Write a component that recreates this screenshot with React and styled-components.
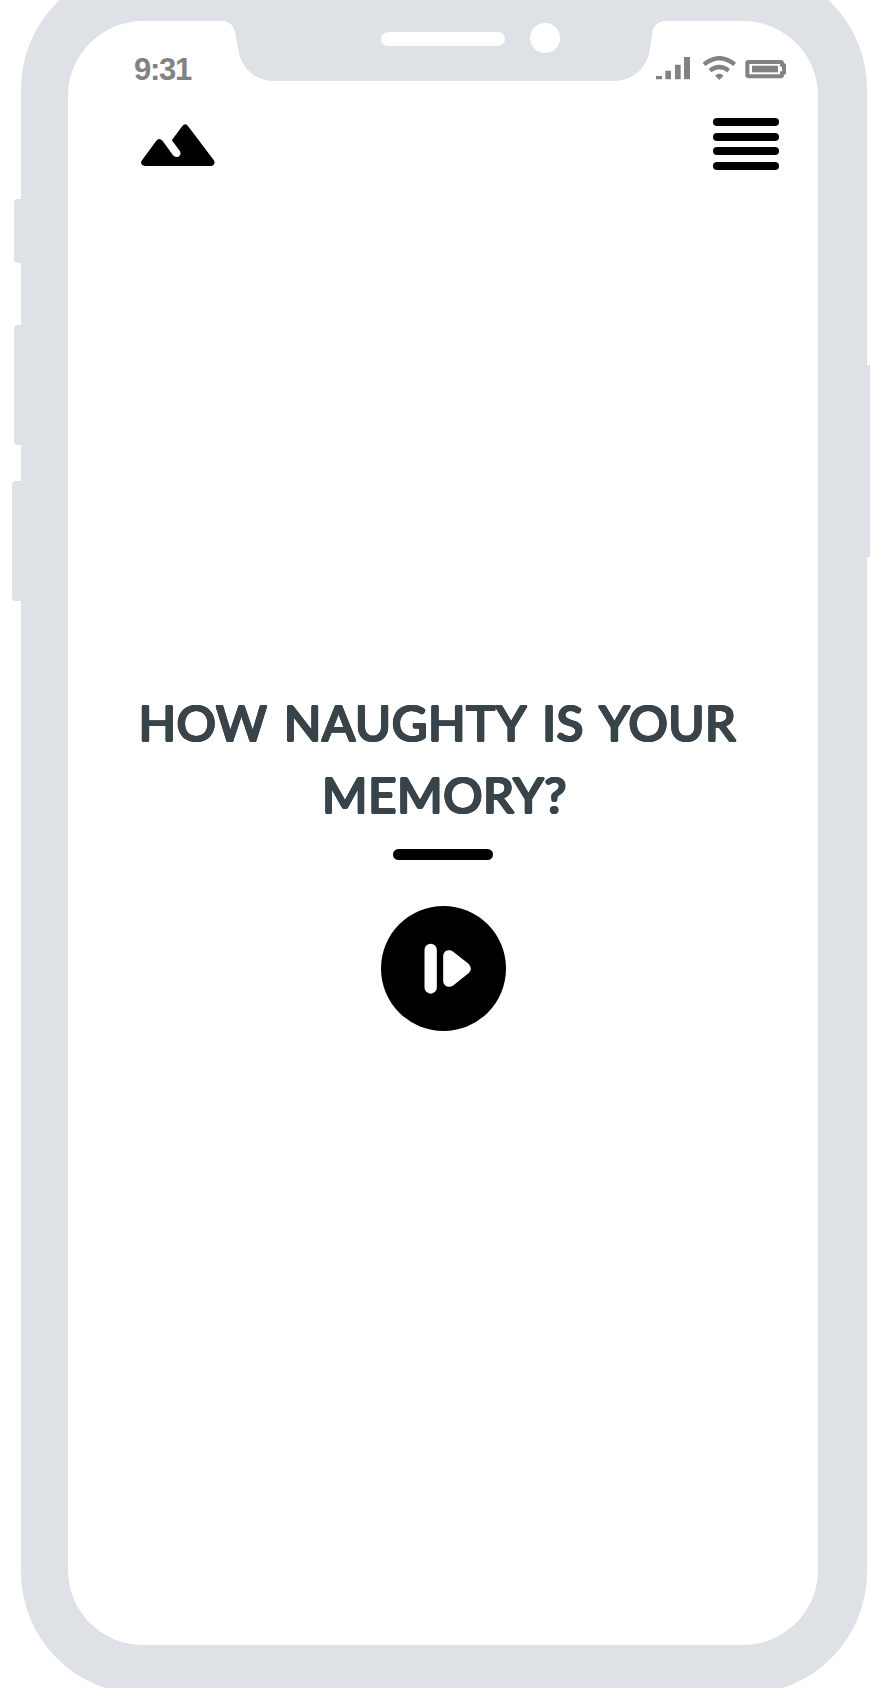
import React from "react";
import styled, { createGlobalStyle } from "styled-components";

const shell = "#dee2e7";

const GlobalStyle = createGlobalStyle`
  *, *::before, *::after { box-sizing: border-box; }
  body { margin: 0; background: #fff; }
`;

const Page = styled.main`
  width: 870px;
  height: 1688px;
  overflow: hidden;
  display: flex;
  align-items: flex-start;
  font-family: "Liberation Sans", Arial, sans-serif;
`;

const Device = styled.div`
  position: relative;
  flex: none;
  width: 846px;
  height: 1727px;
  margin: -33px 0 0 21px;
  padding: 54px 49px 49px 47px;
  border-radius: 122px;
  background: ${shell};
`;

const SideButton = styled.span`
  position: absolute;
  top: ${(p) => p.$top}px;
  ${(p) => p.$side}: -${(p) => p.$depth}px;
  width: ${(p) => p.$depth + 4}px;
  height: ${(p) => p.$height}px;
  border-radius: 4px;
  background: ${shell};
`;

const Screen = styled.div`
  position: relative;
  width: 750px;
  height: 1624px;
  border-radius: 75px;
  background: #fff;
  display: flex;
  flex-direction: column;
`;

const Notch = styled.svg`
  position: absolute;
  top: -1px;
  left: 155px;
  width: 442px;
  height: 61px;
`;

const Speaker = styled.span`
  position: absolute;
  top: 11px;
  left: 313px;
  width: 124px;
  height: 14px;
  border-radius: 7px;
  background: #fff;
`;

const Camera = styled.span`
  position: absolute;
  top: 2px;
  left: 462px;
  width: 30px;
  height: 30px;
  border-radius: 50%;
  background: #fff;
`;

const StatusBar = styled.div`
  display: flex;
  justify-content: space-between;
  align-items: center;
  height: 36px;
  margin-top: 30px;
  padding: 0 32px 0 66px;
  color: #828282;
`;

const Clock = styled.time`
  font-size: 31px;
  font-weight: 700;
  line-height: 36px;
  letter-spacing: -1.3px;
  padding-top: 2px;
`;

const StatusIcons = styled.svg`
  width: 130px;
  height: 24px;
  margin-bottom: 2px;
`;

const NavBar = styled.nav`
  display: flex;
  justify-content: space-between;
  align-items: flex-start;
  height: 54px;
  margin-top: 31px;
  padding: 0 39px 0 73px;
`;

const Logo = styled.svg`
  width: 74px;
  height: 42px;
  margin-top: 6px;
`;

const MenuButton = styled.button`
  display: flex;
  flex-direction: column;
  gap: 6.67px;
  width: 66px;
  padding: 0;
  border: 0;
  background: none;
`;

const MenuLine = styled.span`
  height: 8px;
  border-radius: 4px;
  background: #000;
`;

const Hero = styled.section`
  display: flex;
  flex-direction: column;
  align-items: center;
  margin-top: 514px;
`;

const Title = styled.h1`
  margin: 0;
  display: flex;
  flex-direction: column;
  align-items: center;
  font: 400 49px/72px Lato, sans-serif;
  color: #39434a;
  text-shadow: 1.3px 0 #39434a, -1.3px 0 #39434a, 0 1.3px #39434a, 0 -1.3px #39434a,
    0.9px 0.9px #39434a, -0.9px 0.9px #39434a, 0.9px -0.9px #39434a, -0.9px -0.9px #39434a;
`;

const TitleLine = styled.span`
  white-space: nowrap;
  letter-spacing: 0.65px;
  word-spacing: 4px;
  margin-left: ${(p) => p.$shift}px;
`;

const Divider = styled.span`
  width: 100px;
  height: 11.5px;
  margin-top: 18.5px;
  border-radius: 6px;
  background: #000;
`;

const PlayButton = styled.button`
  width: 125px;
  height: 125px;
  margin-top: 46.4px;
  padding: 0;
  border: 0;
  border-radius: 50%;
  background: #000;
`;

const PlayIcon = styled.svg`
  display: block;
  width: 125px;
  height: 125px;
`;

export default function App() {
  return (
    <Page>
      <GlobalStyle />
      <Device>
        <SideButton $side="left" $top={232} $height={64} $depth={7} />
        <SideButton $side="left" $top={358} $height={120} $depth={7} />
        <SideButton $side="left" $top={514} $height={120} $depth={9} />
        <SideButton $side="right" $top={398} $height={192} $depth={8} />
        <Screen>
          <Notch viewBox="223 20 442 61" aria-hidden="true">
            <path
              fill={shell}
              d="M223 20V21C229 21 234 26 235 32L238 49C241 68 255 81 274 81H614C633 81 647 68 650 49L652.5 32C653.5 26 658 21 665 21V20Z"
            />
          </Notch>
          <Speaker />
          <Camera />
          <StatusBar>
            <Clock>9:31</Clock>
            <StatusIcons viewBox="108 168 390 72" aria-hidden="true">
              <g fill="#828282">
                <path d="M108 228h18v10h-18zM136 212h17v26h-17zM165 194h17v44h-17zM192 171h18v67h-18z" />
                <path d="M285 227Q298 216 311 227L298 240Z" />
              </g>
              <g fill="none" stroke="#828282">
                <path strokeWidth="13" d="M252 193Q298 156 344 193M270 212Q298 190 326 212" />
                <rect x="382" y="186" width="104" height="43" rx="4" strokeWidth="12" />
              </g>
              <path fill="#828282" d="M396 197h78v20h-78z" />
              <path fill="#fff" d="M478 200h8v14h-8z" />
              <path fill="#828282" d="M486 190h7q5 0 5 5v24q0 5-5 5h-7z" />
            </StatusIcons>
          </StatusBar>
          <NavBar>
            <Logo viewBox="424 372 221 126" role="img" aria-label="Home">
              <path d="M436 498C425 498 420 488 427 480L469 423Q478 411 488 422L519 465Q526 474 536 470Q546 463 540 453L516 421L547 379Q556 367 565 379L642 481Q649 493 636 498Z" />
            </Logo>
            <MenuButton aria-label="Menu">
              <MenuLine />
              <MenuLine />
              <MenuLine />
              <MenuLine />
            </MenuButton>
          </NavBar>
          <Hero>
            <Title>
              <TitleLine $shift={-11}>HOW NAUGHTY IS YOUR</TitleLine>
              <TitleLine $shift={3}>MEMORY?</TitleLine>
            </Title>
            <Divider />
            <PlayButton aria-label="Play">
              <PlayIcon viewBox="62.5 229 375 375" aria-hidden="true">
                <rect x="193" y="342" width="37" height="150" rx="18.5" fill="#fff" />
                <path
                  fill="#fff"
                  d="M249 380C249 362 267 357 279 366L325 402Q339 417 325 431L280 467C267 477 249 469 249 453Z"
                />
              </PlayIcon>
            </PlayButton>
          </Hero>
        </Screen>
      </Device>
    </Page>
  );
}
